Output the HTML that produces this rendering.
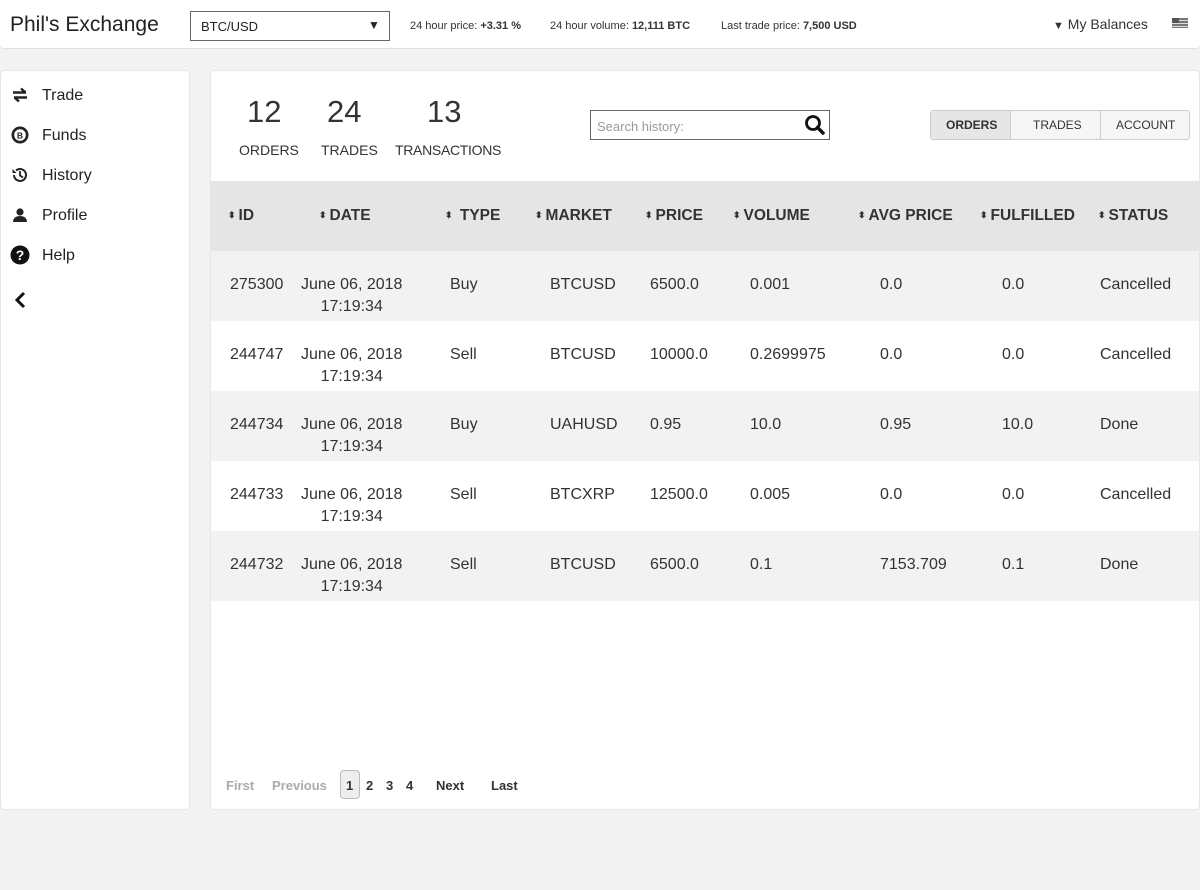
<!DOCTYPE html>
<html><head><meta charset="utf-8"><style>
*{margin:0;padding:0;box-sizing:border-box}
body{width:1200px;height:890px;background:#f2f2f2;font-family:"Liberation Sans",sans-serif;color:#333;position:relative;overflow:hidden}
.a{position:absolute;white-space:nowrap}
.hdr{position:absolute;left:0;top:0;width:1200px;height:49px;background:#fff;border-bottom:1px solid #e0e0e0;border-radius:0 0 4px 4px}
.side{position:absolute;left:0;top:70px;width:190px;height:740px;background:#fff;border:1px solid #e6e6e6;border-radius:4px}
.main{position:absolute;left:210px;top:70px;width:990px;height:740px;background:#fff;border:1px solid #e6e6e6;border-radius:4px;overflow:hidden}
.nav{font-size:16px;color:#222}
.th{font-size:15.5px;font-weight:bold;color:#333}
.td{font-size:16px;color:#333;line-height:22px}
.s{font-size:9px;vertical-align:2px;margin-right:3px}
.small{font-size:11px;color:#333}
</style></head><body>
<div class="hdr"></div>
<div class="a" style="left:10px;top:13px;font-size:21px;color:#222">Phil's Exchange</div>
<div class="a" style="left:190px;top:11px;width:200px;height:30px;border:1px solid #666;background:#fff"></div>
<div class="a" style="left:201px;top:19px;font-size:13px;color:#222">BTC/USD</div>
<div class="a" style="left:368px;top:18px;font-size:12px;color:#222">▼</div>
<div class="a small" style="left:410px;top:20px">24 hour price: <b>+3.31 %</b></div>
<div class="a small" style="left:550px;top:20px">24 hour volume: <b>12,111 BTC</b></div>
<div class="a small" style="left:721px;top:20px">Last trade price: <b>7,500 USD</b></div>
<div class="a" style="left:1053px;top:16px;font-size:14px;color:#333"><span style="font-size:11px">▼</span> My Balances</div>
<div class="a" style="left:1172px;top:18px;width:16px;height:10px;background:repeating-linear-gradient(#777 0 2px,#ddd 2px 3px)"></div>
<div class="a" style="left:1172px;top:18px;width:7px;height:5px;background:#555"></div>

<div class="side"></div>
<svg class="a" style="left:12px;top:87px" width="16" height="16" viewBox="0 0 16 16"><path d="M1 5.5h13M9 1.5l4.5 4M15 10.5H2M7 14.5l-4.5-4" stroke="#222" stroke-width="2.4" fill="none"/></svg>
<div class="a nav" style="left:42px;top:87px">Trade</div>
<svg class="a" style="left:11px;top:126px" width="18" height="18" viewBox="0 0 18 18"><circle cx="9" cy="9" r="8.5" fill="#222"/><circle cx="9" cy="9" r="5.8" fill="#fff"/><text x="9" y="12.3" font-size="8.5" font-weight="bold" text-anchor="middle" fill="#222" font-family="Liberation Sans">B</text></svg>
<div class="a nav" style="left:42px;top:127px">Funds</div>
<svg class="a" style="left:11px;top:166px" width="18" height="18" viewBox="0 0 18 18"><path d="M3 9a6 6 0 1 0 2-4.5" stroke="#222" stroke-width="2" fill="none"/><path d="M1.5 3v4h4z" fill="#222"/><path d="M9 5v4.5l3 2" stroke="#222" stroke-width="1.8" fill="none"/></svg>
<div class="a nav" style="left:42px;top:167px">History</div>
<svg class="a" style="left:12px;top:207px" width="16" height="16" viewBox="0 0 16 16"><circle cx="8" cy="5" r="3.6" fill="#222"/><path d="M1 15c0-4 3-6 7-6s7 2 7 6z" fill="#222"/></svg>
<div class="a nav" style="left:42px;top:207px">Profile</div>
<svg class="a" style="left:10px;top:245px" width="20" height="20" viewBox="0 0 20 20"><circle cx="10" cy="10" r="9.5" fill="#111"/><text x="10" y="15" font-size="14" font-weight="bold" text-anchor="middle" fill="#fff" font-family="Liberation Sans">?</text></svg>
<div class="a nav" style="left:42px;top:247px">Help</div>
<svg class="a" style="left:13px;top:291px" width="14" height="18" viewBox="0 0 14 18"><path d="M11 2L4 9l7 7" stroke="#111" stroke-width="3" fill="none"/></svg>

<div class="main">
<div style="position:absolute;left:0;top:110px;width:990px;height:70px;background:#e5e5e5"></div>
<div style="position:absolute;left:0;top:180px;width:990px;height:70px;background:#f2f2f2"></div>
<div style="position:absolute;left:0;top:320px;width:990px;height:70px;background:#f2f2f2"></div>
<div style="position:absolute;left:0;top:460px;width:990px;height:70px;background:#f2f2f2"></div>
</div>
<div class="a" style="left:247px;top:94px;font-size:31px;color:#333">12</div>
<div class="a" style="left:327px;top:94px;font-size:31px;color:#333">24</div>
<div class="a" style="left:427px;top:94px;font-size:31px;color:#333">13</div>
<div class="a" style="left:239px;top:142px;font-size:14px">ORDERS</div>
<div class="a" style="left:321px;top:142px;font-size:14px">TRADES</div>
<div class="a" style="left:395px;top:142px;font-size:14px;letter-spacing:-0.3px">TRANSACTIONS</div>
<div class="a" style="left:590px;top:110px;width:240px;height:30px;border:1px solid #666;background:#fff"></div>
<div class="a" style="left:597px;top:119px;font-size:13px;color:#999">Search history:</div>
<svg class="a" style="left:804px;top:114px" width="22" height="22" viewBox="0 0 22 22"><circle cx="9" cy="9" r="6.5" stroke="#111" stroke-width="2.8" fill="none"/><path d="M13.5 13.5L19 19" stroke="#111" stroke-width="3.5" stroke-linecap="round"/></svg>
<div class="a" style="left:930px;top:110px;width:260px;height:30px;border:1px solid #ccc;border-radius:3px;background:#f6f6f6"></div>
<div class="a" style="left:931px;top:111px;width:79px;height:28px;background:#e6e6e6"></div>
<div class="a" style="left:1010px;top:111px;width:1px;height:28px;background:#ccc"></div>
<div class="a" style="left:1100px;top:111px;width:1px;height:28px;background:#ccc"></div>
<div class="a" style="left:946px;top:118px;font-size:12px;font-weight:bold">ORDERS</div>
<div class="a" style="left:1033px;top:118px;font-size:12px">TRADES</div>
<div class="a" style="left:1116px;top:118px;font-size:12px">ACCOUNT</div>

<div class="a th" style="left:228px;top:207px"><span class="s">⬍</span>ID</div>
<div class="a th" style="left:319px;top:207px"><span class="s">⬍</span>DATE</div>
<div class="a th" style="left:445px;top:207px"><span class="s">⬍</span> TYPE</div>
<div class="a th" style="left:535px;top:207px"><span class="s">⬍</span>MARKET</div>
<div class="a th" style="left:645px;top:207px"><span class="s">⬍</span>PRICE</div>
<div class="a th" style="left:733px;top:207px"><span class="s">⬍</span>VOLUME</div>
<div class="a th" style="left:858px;top:207px"><span class="s">⬍</span>AVG PRICE</div>
<div class="a th" style="left:980px;top:207px"><span class="s">⬍</span>FULFILLED</div>
<div class="a th" style="left:1098px;top:207px"><span class="s">⬍</span>STATUS</div>

<div class="a td" style="left:230px;top:274px">275300</div><div class="a td" style="left:301px;top:274px;text-align:center">June 06, 2018<br>17:19:34</div><div class="a td" style="left:450px;top:274px">Buy</div><div class="a td" style="left:550px;top:274px">BTCUSD</div><div class="a td" style="left:650px;top:274px">6500.0</div><div class="a td" style="left:750px;top:274px">0.001</div><div class="a td" style="left:880px;top:274px">0.0</div><div class="a td" style="left:1002px;top:274px">0.0</div><div class="a td" style="left:1100px;top:274px">Cancelled</div>
<div class="a td" style="left:230px;top:344px">244747</div><div class="a td" style="left:301px;top:344px;text-align:center">June 06, 2018<br>17:19:34</div><div class="a td" style="left:450px;top:344px">Sell</div><div class="a td" style="left:550px;top:344px">BTCUSD</div><div class="a td" style="left:650px;top:344px">10000.0</div><div class="a td" style="left:750px;top:344px">0.2699975</div><div class="a td" style="left:880px;top:344px">0.0</div><div class="a td" style="left:1002px;top:344px">0.0</div><div class="a td" style="left:1100px;top:344px">Cancelled</div>
<div class="a td" style="left:230px;top:414px">244734</div><div class="a td" style="left:301px;top:414px;text-align:center">June 06, 2018<br>17:19:34</div><div class="a td" style="left:450px;top:414px">Buy</div><div class="a td" style="left:550px;top:414px">UAHUSD</div><div class="a td" style="left:650px;top:414px">0.95</div><div class="a td" style="left:750px;top:414px">10.0</div><div class="a td" style="left:880px;top:414px">0.95</div><div class="a td" style="left:1002px;top:414px">10.0</div><div class="a td" style="left:1100px;top:414px">Done</div>
<div class="a td" style="left:230px;top:484px">244733</div><div class="a td" style="left:301px;top:484px;text-align:center">June 06, 2018<br>17:19:34</div><div class="a td" style="left:450px;top:484px">Sell</div><div class="a td" style="left:550px;top:484px">BTCXRP</div><div class="a td" style="left:650px;top:484px">12500.0</div><div class="a td" style="left:750px;top:484px">0.005</div><div class="a td" style="left:880px;top:484px">0.0</div><div class="a td" style="left:1002px;top:484px">0.0</div><div class="a td" style="left:1100px;top:484px">Cancelled</div>
<div class="a td" style="left:230px;top:554px">244732</div><div class="a td" style="left:301px;top:554px;text-align:center">June 06, 2018<br>17:19:34</div><div class="a td" style="left:450px;top:554px">Sell</div><div class="a td" style="left:550px;top:554px">BTCUSD</div><div class="a td" style="left:650px;top:554px">6500.0</div><div class="a td" style="left:750px;top:554px">0.1</div><div class="a td" style="left:880px;top:554px">7153.709</div><div class="a td" style="left:1002px;top:554px">0.1</div><div class="a td" style="left:1100px;top:554px">Done</div>

<div class="a" style="left:226px;top:778px;font-size:13px;font-weight:bold;color:#aaa">First</div>
<div class="a" style="left:272px;top:778px;font-size:13px;font-weight:bold;color:#aaa">Previous</div>
<div class="a" style="left:340px;top:770px;width:20px;height:29px;border:1px solid #bbb;border-radius:4px;background:#eee"></div>
<div class="a" style="left:346px;top:778px;font-size:13px;font-weight:bold">1</div>
<div class="a" style="left:366px;top:778px;font-size:13px;font-weight:bold">2</div>
<div class="a" style="left:386px;top:778px;font-size:13px;font-weight:bold">3</div>
<div class="a" style="left:406px;top:778px;font-size:13px;font-weight:bold">4</div>
<div class="a" style="left:436px;top:778px;font-size:13px;font-weight:bold">Next</div>
<div class="a" style="left:491px;top:778px;font-size:13px;font-weight:bold">Last</div>
</body></html>
